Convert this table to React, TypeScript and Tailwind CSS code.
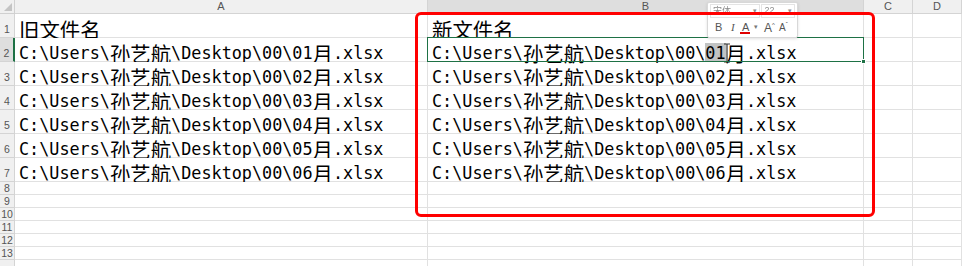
import React from "react";

const CJK = /[\u3400-\u9fff]/;

const rows: [string, string][] = [
  ["旧文件名", "新文件名"],
  ["C:\\Users\\孙艺航\\Desktop\\00\\01月.xlsx", "C:\\Users\\孙艺航\\Desktop\\00\\01月.xlsx"],
  ["C:\\Users\\孙艺航\\Desktop\\00\\02月.xlsx", "C:\\Users\\孙艺航\\Desktop\\00\\02月.xlsx"],
  ["C:\\Users\\孙艺航\\Desktop\\00\\03月.xlsx", "C:\\Users\\孙艺航\\Desktop\\00\\03月.xlsx"],
  ["C:\\Users\\孙艺航\\Desktop\\00\\04月.xlsx", "C:\\Users\\孙艺航\\Desktop\\00\\04月.xlsx"],
  ["C:\\Users\\孙艺航\\Desktop\\00\\05月.xlsx", "C:\\Users\\孙艺航\\Desktop\\00\\05月.xlsx"],
  ["C:\\Users\\孙艺航\\Desktop\\00\\06月.xlsx", "C:\\Users\\孙艺航\\Desktop\\00\\06月.xlsx"],
];

const CellText = ({ text }: { text: string }) => {
  const parts = text.match(/[\u3400-\u9fff]+|[^\u3400-\u9fff]+/g) || [];
  return (
    <>
      {parts.map((p, i) =>
        CJK.test(p) ? (
          <span key={i} className="font-['Noto_Sans_CJK_SC',sans-serif] text-[20.4px]">
            {p}
          </span>
        ) : (
          <span key={i} className="font-['DejaVu_Sans_Mono',monospace] text-[16.8px]">
            {p}
          </span>
        )
      )}
    </>
  );
};

const textCls =
  "flex items-end pl-[4px] whitespace-nowrap overflow-visible leading-[15px] text-black border-r border-b border-[#e1e1e1] bg-white";

const headCls =
  "flex items-center justify-center text-[11px] leading-none text-[#555] font-['Liberation_Sans',sans-serif] border-r border-b border-[#d4d4d4]";

const rowNumCls =
  "flex justify-center text-[10.5px] leading-none text-[#555] font-['Liberation_Sans',sans-serif] border-r border-b border-[#d4d4d4]";

export default function App() {
  return (
    <div className="relative w-[962px] h-[266px] overflow-hidden bg-white">
      <div className="grid grid-cols-[15px_413px_436px_49px_49px] grid-rows-[14px_repeat(7,24px)_repeat(7,13px)]">
        {/* header row */}
        <div className="relative bg-[#f0f0f0] border-r border-b border-[#d0d0d0]">
          <svg className="absolute right-[2px] bottom-[2px]" width="8" height="8" viewBox="0 0 8 8">
            <path d="M8 0 L8 8 L0 8 Z" fill="#c4c4c4" />
          </svg>
        </div>
        <div className={headCls + " bg-[#f0f0f0]"}>A</div>
        <div className={headCls + " bg-[#dedede] border-b-2 border-b-[#1e7145]"}>B</div>
        <div className={headCls + " bg-[#f0f0f0]"}>C</div>
        <div className={headCls + " bg-[#f0f0f0]"}>D</div>

        {rows.map((r, i) => (
          <React.Fragment key={i}>
            <div
              className={
                rowNumCls +
                " items-end pb-[3px] " +
                (i === 1 ? "bg-[#dedede] border-r-2 border-r-[#1e7145]" : "bg-[#f0f0f0]")
              }
            >
              {i + 1}
            </div>
            <div className={textCls}>
              <CellText text={r[0]} />
            </div>
            {i === 1 ? (
              <div className={textCls + " relative"}>
                <CellText text="C:\Users\孙艺航\Desktop\00\" />
                <span className="relative bg-[#c1c3c3] pt-[3px]">
                  <CellText text="01" />
                  <svg className="absolute right-[-5px] top-[0px]" width="8" height="20" viewBox="0 0 8 20">
                    <path d="M1 1 H7 M4 1 V19 M1 19 H7" stroke="#333" strokeWidth="1.2" fill="none" />
                  </svg>
                </span>
                <CellText text="月.xlsx" />
                <div className="absolute left-[-1px] top-[-1px] right-[-1px] bottom-[-1px] border border-[#1e7145] pointer-events-none" />
                <div className="absolute right-[-3px] bottom-[-3px] w-[5px] h-[5px] bg-[#1e7145] border border-white" />
              </div>
            ) : (
              <div className={textCls}>
                <CellText text={r[1]} />
              </div>
            )}
            <div className={textCls} />
            <div className={textCls} />
          </React.Fragment>
        ))}

        {[8, 9, 10, 11, 12, 13, 0].map((n) => (
          <React.Fragment key={n}>
            <div className={rowNumCls + " items-center bg-[#f0f0f0]"}>{n > 0 ? n : ""}</div>
            <div className={textCls} />
            <div className={textCls} />
            <div className={textCls} />
            <div className={textCls} />
          </React.Fragment>
        ))}
      </div>

      {/* floating mini toolbar */}
      <div className="absolute left-[707px] top-[2px] w-[91px] h-[36px] bg-white border border-[#d8d8d8] rounded-[2px] shadow-[0_1px_3px_rgba(0,0,0,0.12)] px-[2px] pt-[1px] font-['Liberation_Sans',sans-serif]">
        <div className="flex gap-[1px] h-[14px]">
          <div className="w-[51px] border border-[#e4e4e4] flex items-center justify-between px-[2px] text-[9px] text-[#8c8c8c]">
            <span className="font-['Noto_Sans_CJK_SC',sans-serif] blur-[0.5px]">宋体</span>
            <span className="text-[7px]">▾</span>
          </div>
          <div className="w-[34px] border border-[#e4e4e4] flex items-center justify-between px-[2px] text-[9px] text-[#8c8c8c]">
            <span className="blur-[0.4px]">22</span>
            <span className="text-[7px]">▾</span>
          </div>
        </div>
        <div className="flex items-center h-[19px] text-[11px] text-[#555]">
          <span className="w-[15px] pl-[5px]">B</span>
          <span className="w-[15px] pl-[6px] italic font-['Liberation_Serif',serif]">I</span>
          <span className="relative w-[11px] pl-[2px]">
            A
            <span className="absolute left-[0px] top-[13px] w-[10px] h-[2px] bg-[#e00000]" />
          </span>
          <span className="w-[12px] pl-[3px] text-[7px] text-[#777]">▾</span>
          <span className="w-[15px] pl-[1px] text-[12px]">
            A<sup className="text-[6px] -top-[5px]">^</sup>
          </span>
          <span className="w-[14px] pl-[1px] text-[10px]">
            A<sup className="text-[6px] -top-[5px]">ˇ</sup>
          </span>
        </div>
      </div>

      {/* red highlight box */}
      <div className="absolute left-[415px] top-[12px] w-[460px] h-[205px] border-[3px] border-[#ff0000] rounded-[6px] pointer-events-none" />
    </div>
  );
}
